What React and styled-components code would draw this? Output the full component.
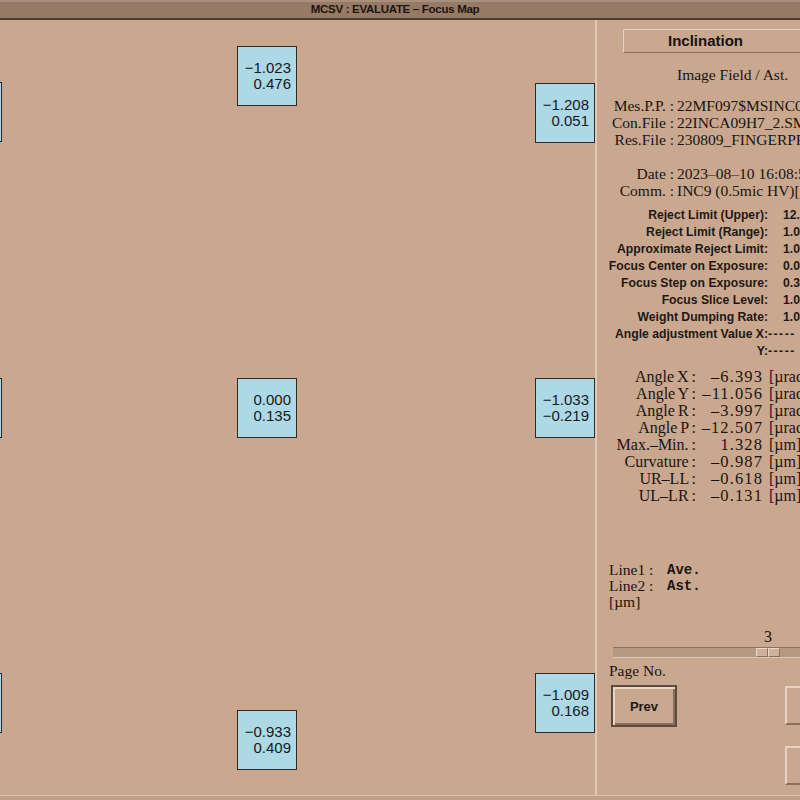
import React from 'react';
import styled, { createGlobalStyle } from 'styled-components';

const BG = '#c9a88f';
const SERIF = '"Liberation Serif", "Times New Roman", serif';
const SANS = '"Liberation Sans", Arial, sans-serif';
const MONO = '"Liberation Mono", "Courier New", monospace';

const GlobalStyle = createGlobalStyle`
  html, body {
    margin: 0;
    padding: 0;
    width: 800px;
    height: 800px;
    overflow: hidden;
    background: ${BG};
  }
`;

// focus points on the map (page coords minus the title bar)
const points = [
  { x: -58, y: 62, a: '', b: '' },
  { x: 237, y: 26, a: '−1.023', b: '0.476' },
  { x: 535, y: 63, a: '−1.208', b: '0.051' },
  { x: -58, y: 358, a: '', b: '' },
  { x: 237, y: 358, a: '0.000', b: '0.135' },
  { x: 535, y: 358, a: '−1.033', b: '−0.219' },
  { x: -58, y: 653, a: '', b: '' },
  { x: 237, y: 690, a: '−0.933', b: '0.409' },
  { x: 535, y: 653, a: '−1.009', b: '0.168' },
];

const params = [
  ['Reject Limit (Upper):', '12.000 [µm]'],
  ['Reject Limit (Range):', '1.000 [µm]'],
  ['Approximate Reject Limit:', '1.000 [µm]'],
  ['Focus Center on Exposure:', '0.000 [µm]'],
  ['Focus Step on Exposure:', '0.300 [µm]'],
  ['Focus Slice Level:', '1.000'],
  ['Weight Dumping Rate:', '1.000'],
];

const angles = [
  ['Angle X :', '–6.393', '[µrad]'],
  ['Angle Y :', '–11.056', '[µrad]'],
  ['Angle R :', '–3.997', '[µrad]'],
  ['Angle P :', '–12.507', '[µrad]'],
  ['Max.–Min. :', '1.328', '[µm]'],
  ['Curvature :', '–0.987', '[µm]'],
  ['UR–LL :', '–0.618', '[µm]'],
  ['UL–LR :', '–0.131', '[µm]'],
];

const Window = styled.div`
  width: 800px;
  height: 800px;
  display: flex;
  flex-direction: column;
  background: ${BG};
  overflow: hidden;
`;

const TitleBar = styled.div`
  flex: none;
  height: 18px;
  background: linear-gradient(#a8907c 0 2px, #977a66 2px);
  border-bottom: 2px solid #4f3b2e;
  display: flex;
  align-items: center;
  justify-content: center;
  padding-right: 10px;
`;

const TitleText = styled.span`
  font-family: ${SANS};
  font-weight: bold;
  font-size: 11.5px;
  letter-spacing: -0.3px;
  color: #1c1410;
`;

const Body = styled.div`
  flex: 1;
  display: flex;
  min-height: 0;
`;

const BottomEdge = styled.div`
  flex: none;
  height: 4px;
  border-top: 1px solid #dcc2a6;
  background: #c0a087;
`;

const MapArea = styled.div`
  position: relative;
  width: 595px;
  flex: none;
`;

const ValueBox = styled.div`
  position: absolute;
  width: 60px;
  height: 60px;
  box-sizing: border-box;
  border: 1px solid #2e2a28;
  background: #add8e6;
  display: flex;
  flex-direction: column;
  justify-content: center;
  align-items: flex-end;
  padding-right: 5px;
  font-family: ${SANS};
  font-size: 15px;
  line-height: 16px;
  color: #151a1d;
`;

const Panel = styled.div`
  flex: 1;
  overflow: hidden;
  border-left: 2px solid #e0c8b3;
`;

const PanelInner = styled.div`
  width: 320px;
  display: flex;
  flex-direction: column;
  font-family: ${SERIF};
  font-size: 15.5px;
  color: #1a1410;
  white-space: nowrap;
`;

const Header = styled.div`
  margin: 9px 0 0 26px;
  width: 260px;
  height: 24px;
  box-sizing: border-box;
  border-top: 1px solid #e6d2c0;
  border-left: 1px solid #e6d2c0;
  border-bottom: 1px solid #8a6e5a;
  padding-left: 44px;
  font-family: ${SANS};
  font-weight: bold;
  font-size: 15px;
  line-height: 22px;
  color: #161210;
`;

const Caption = styled.div`
  margin-top: 13px;
  padding-left: 80px;
  line-height: 17px;
`;

const Block = styled.div`
  margin-top: ${(p) => p.$gap}px;
  display: flex;
  flex-direction: column;
`;

const InfoRow = styled.div`
  display: flex;
  line-height: 17px;
`;

const InfoLabel = styled.span`
  width: 77px;
  text-align: right;
  flex: none;
`;

const InfoValue = styled.span`
  margin-left: 3px;
`;

const ParamRow = styled.div`
  display: flex;
  line-height: 17px;
  font-family: ${SANS};
  font-weight: bold;
  font-size: 12.2px;
  color: #1e1814;
`;

const ParamLabel = styled.span`
  width: 171px;
  flex: none;
  text-align: right;
`;

const ParamValue = styled.span`
  margin-left: ${(p) => (p.$tight ? 0 : 15)}px;
  letter-spacing: ${(p) => (p.$tight ? '1.5px' : '0')};
`;

const AngleRow = styled.div`
  display: flex;
  height: 17px;
  line-height: 17px;
  font-size: 16px;
`;

const AngleLabel = styled.span`
  width: 99px;
  flex: none;
  text-align: right;
  word-spacing: -1px;
`;

const AngleValue = styled.span`
  width: 67px;
  flex: none;
  text-align: right;
  font-size: 16.5px;
  letter-spacing: 1.1px;
  margin-right: -1.1px;
`;

const Unit = styled.span`
  margin-left: 7px;
  font-size: 16px;
`;

const LineRow = styled.div`
  display: flex;
  line-height: 16px;
  padding-left: 12px;
`;

const LineLabel = styled.span`
  width: 58px;
  flex: none;
`;

const LineValue = styled.span`
  font-family: ${MONO};
  font-weight: bold;
  font-size: 14px;
`;

const SliderValue = styled.div`
  margin-top: 18px;
  padding-left: 167px;
  line-height: 17px;
  font-size: 16px;
`;

const Trough = styled.div`
  margin: 2px 0 0 16px;
  width: 300px;
  height: 11px;
  box-sizing: border-box;
  background: #b49a85;
  border-top: 1px solid #8e725e;
  border-bottom: 1px solid #dfc8b4;
  display: flex;
  padding-left: 143px;
`;

const Thumb = styled.div`
  width: 12px;
  height: 9px;
  box-sizing: border-box;
  background: #cfb29c;
  border-top: 1px solid #eadacb;
  border-left: 1px solid #eadacb;
  border-right: 1px solid #8c705c;
  border-bottom: 1px solid #8c705c;
`;

const PageLabel = styled.div`
  margin-top: 4px;
  padding-left: 12px;
  line-height: 17px;
`;

const ButtonRow = styled.div`
  margin-top: 6px;
  padding-left: 14px;
  display: flex;
  align-items: flex-start;
`;

const PrevButton = styled.div`
  width: 66px;
  height: 42px;
  box-sizing: border-box;
  border: 2px solid #5a4c42;
  background: ${BG};
  box-shadow: inset 2px 2px 0 #e9d6c4, inset -2px -2px 0 #8b6e59;
  display: flex;
  align-items: center;
  justify-content: center;
  font-family: ${SANS};
  font-weight: bold;
  font-size: 13px;
  color: #1e1814;
`;

const SideButtons = styled.div`
  margin: 1px 0 0 108px;
  display: flex;
  flex-direction: column;
  gap: 21px;
`;

const SideButton = styled.div`
  width: 60px;
  height: 39px;
  box-sizing: border-box;
  background: ${BG};
  border-top: 2px solid #e6d2c0;
  border-left: 2px solid #e6d2c0;
  border-bottom: 2px solid #8b6e59;
  border-right: 2px solid #8b6e59;
`;

export default function App() {
  return (
    <Window>
      <GlobalStyle />
      <TitleBar>
        <TitleText>MCSV : EVALUATE – Focus Map</TitleText>
      </TitleBar>
      <Body>
        <MapArea>
          {points.map((p, i) => (
            <ValueBox key={i} style={{ left: p.x, top: p.y }}>
              <span>{p.a}</span>
              <span>{p.b}</span>
            </ValueBox>
          ))}
        </MapArea>
        <Panel>
          <PanelInner>
            <Header>Inclination</Header>
            <Caption>Image Field / Ast.</Caption>
            <Block $gap={14}>
              <InfoRow>
                <InfoLabel>Mes.P.P. :</InfoLabel>
                <InfoValue>22MF097$MSINC09</InfoValue>
              </InfoRow>
              <InfoRow>
                <InfoLabel>Con.File :</InfoLabel>
                <InfoValue>22INCA09H7_2.SMP</InfoValue>
              </InfoRow>
              <InfoRow>
                <InfoLabel>Res.File :</InfoLabel>
                <InfoValue>230809_FINGERPRINT</InfoValue>
              </InfoRow>
            </Block>
            <Block $gap={17}>
              <InfoRow>
                <InfoLabel>Date :</InfoLabel>
                <InfoValue>2023–08–10 16:08:52</InfoValue>
              </InfoRow>
              <InfoRow>
                <InfoLabel>Comm. :</InfoLabel>
                <InfoValue>INC9 (0.5mic HV)[</InfoValue>
              </InfoRow>
            </Block>
            <Block $gap={8}>
              {params.map(([l, v]) => (
                <ParamRow key={l}>
                  <ParamLabel>{l}</ParamLabel>
                  <ParamValue>{v}</ParamValue>
                </ParamRow>
              ))}
              <ParamRow>
                <ParamLabel>Angle adjustment Value X:</ParamLabel>
                <ParamValue $tight>-----</ParamValue>
              </ParamRow>
              <ParamRow>
                <ParamLabel>Y:</ParamLabel>
                <ParamValue $tight>-----</ParamValue>
              </ParamRow>
            </Block>
            <Block $gap={8}>
              {angles.map(([l, v, u]) => (
                <AngleRow key={l}>
                  <AngleLabel>{l}</AngleLabel>
                  <AngleValue>{v}</AngleValue>
                  <Unit>{u}</Unit>
                </AngleRow>
              ))}
            </Block>
            <Block $gap={58}>
              <LineRow>
                <LineLabel>Line1 :</LineLabel>
                <LineValue>Ave.</LineValue>
              </LineRow>
              <LineRow>
                <LineLabel>Line2 :</LineLabel>
                <LineValue>Ast.</LineValue>
              </LineRow>
              <LineRow>
                <LineLabel>[µm]</LineLabel>
              </LineRow>
            </Block>
            <SliderValue>3</SliderValue>
            <Trough>
              <Thumb />
              <Thumb />
            </Trough>
            <PageLabel>Page No.</PageLabel>
            <ButtonRow>
              <PrevButton>Prev</PrevButton>
              <SideButtons>
                <SideButton />
                <SideButton />
              </SideButtons>
            </ButtonRow>
          </PanelInner>
        </Panel>
      </Body>
      <BottomEdge />
    </Window>
  );
}
